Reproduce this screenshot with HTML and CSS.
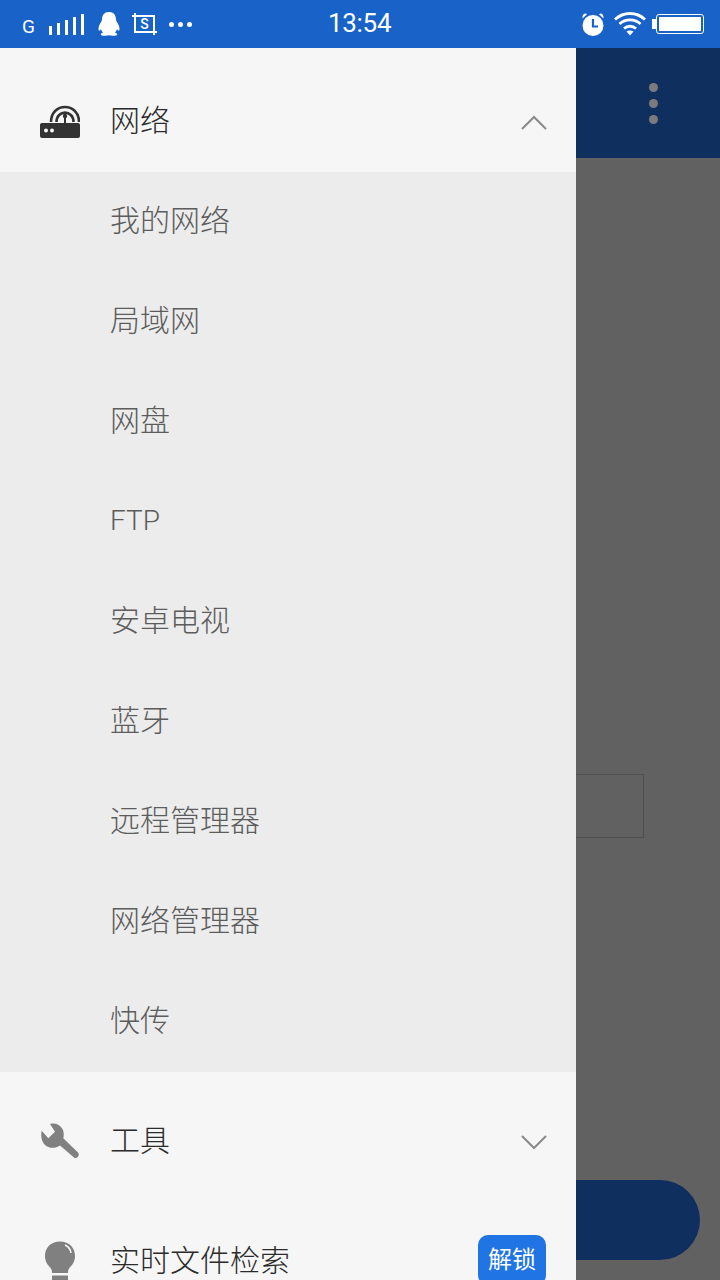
FILE: index.html
```html
<!DOCTYPE html>
<html lang="en">
<head>
    <meta charset="UTF-8">
    <meta name="viewport" content="width=device-width, initial-scale=1.0">
    <title>Drawer</title>
    <link rel="stylesheet" href="styles.css">
</head>
<body>

<div class="screen">
    <!-- Status bar -->
    <div class="status-bar">
        <div class="status-left">
            <span class="net-type">G</span>
            <div class="signal">
                <i class="bar-1"></i><i class="bar-2"></i><i class="bar-3"></i><i class="bar-4"></i><i class="bar-5"></i>
            </div>
            <svg class="qq-icon" width="22" height="24" viewBox="0 0 22 24">
                <path fill="#fff" d="M11 0C6.200 0 4.200 3.200 4 7.200 3.900 8.600 3.500 9.400 2.600 10.800 1.200 13 .2 15.600.6 18c.3 1.300 1.600.6 2.400-.9.4 1.500 1 2.600 2 3.500-1.500.5-2.400 1.200-2.200 2 .2 1.100 2.500 1.400 4.600 1.200 1.300-.1 2.500-.6 3.600-.6s2.300.5 3.600.6c2.100.2 4.400-.1 4.600-1.200.2-.8-.7-1.500-2.200-2 1-.9 1.600-2 2-3.500.8 1.500 2.100 2.200 2.400.9.4-2.400-.6-5-2-7.200-.9-1.400-1.300-2.200-1.400-3.600C17.800 3.200 15.800 0 11 0z"/>
            </svg>
            <div class="shot-icon">
                <svg class="shot-frame" width="25" height="22" viewBox="0 0 25 22">
                    <path fill="none" stroke="#fff" stroke-width="2" d="M3 0V19H25M0 3H22V22"/>
                </svg>
                <span>S</span>
            </div>
            <div class="more-dots"><i></i><i></i><i></i></div>
        </div>
        <div class="status-time">13:54</div>
        <div class="status-right">
            <svg width="24" height="24" viewBox="0 0 24 24">
                <path fill="#fff" d="M1.500 6.500 6 2.200C4.300.8 1 1.800 1.500 6.500zM22.500 6.500 18 2.200c1.700-1.400 5-.4 4.500 4.300z"/>
                <circle cx="12" cy="13.500" r="10.500" fill="#fff"/>
                <path fill="none" stroke="#1862c8" stroke-width="2.200" d="M12 7v7.500h5"/>
            </svg>
            <svg class="wifi-icon" width="32" height="24" viewBox="0 0 32 24">
                <g fill="none" stroke="#fff" stroke-width="2.800">
                    <path d="M1 7.500C9.500-.5 22.500-.5 31 7.500"/>
                    <path d="M5.500 12c6-5.500 15-5.500 21 0"/>
                    <path d="M10 16.500c3.500-3 8.500-3 12 0"/>
                </g>
                <path fill="#fff" d="M12.500 19.500c2-1.500 5-1.500 7 0L16 23.500z"/>
            </svg>
            <div class="battery">
                <i class="battery-tip"></i>
                <div class="battery-body"><i></i></div>
            </div>
        </div>
    </div>

    <!-- App behind the drawer -->
    <div class="app-bar">
        <div class="overflow-btn"><i></i><i></i><i></i></div>
    </div>
    <div class="app-body">
        <div class="outline-box"></div>
        <div class="fab-pill"></div>
    </div>

    <!-- Drawer -->
    <div class="drawer">
        <div class="menu-row first-row">
            <svg class="menu-icon" width="40" height="36" viewBox="0 0 40 36">
                <g fill="none" stroke="#333" stroke-width="2.600">
                    <path d="M11 20C11 0 39 0 39 20"/>
                    <path d="M16.500 20C16.500 7.500 33.500 7.500 33.500 20"/>
                </g>
                <circle cx="25" cy="14" r="2.200" fill="#333"/>
                <rect x="24" y="14" width="2" height="8" fill="#333"/>
                <rect x="0" y="21" width="40" height="15" rx="2" fill="#333"/>
                <circle cx="6" cy="28.500" r="2" fill="#f6f6f6"/>
                <circle cx="12" cy="28.500" r="2" fill="#f6f6f6"/>
            </svg>
            <span class="menu-label">网络</span>
            <svg class="chevron chevron-up" width="26" height="16" viewBox="0 0 26 16">
                <path fill="none" stroke="#8a8a8a" stroke-width="2" d="M1 15 13 3l12 12"/>
            </svg>
        </div>

        <div class="sub-list">
            <div class="sub-item">我的网络</div>
            <div class="sub-item">局域网</div>
            <div class="sub-item">网盘</div>
            <div class="sub-item latin">FTP</div>
            <div class="sub-item">安卓电视</div>
            <div class="sub-item">蓝牙</div>
            <div class="sub-item">远程管理器</div>
            <div class="sub-item">网络管理器</div>
            <div class="sub-item">快传</div>
        </div>

        <div class="menu-row tools-row">
            <svg class="menu-icon" width="40" height="38" viewBox="0 0 40 38">
                <path fill="#808080" d="M10 3C15 1.500 20 3.500 22.500 8 24 11 24 14.500 23.300 17.300L38 31.500C40.500 34 36.500 38.800 34 36.500L20 24.500C15 27.800 9 27.500 5 24 1.500 20.500.5 15 1.700 9.700L8.300 17.300 15 10.700z"/>
            </svg>
            <span class="menu-label">工具</span>
            <svg class="chevron chevron-down" width="26" height="16" viewBox="0 0 26 16">
                <path fill="none" stroke="#8a8a8a" stroke-width="2" d="M1 1l12 12L25 1"/>
            </svg>
        </div>

        <div class="menu-row search-row">
            <svg class="menu-icon" width="40" height="40" viewBox="0 0 40 40">
                <path fill="#808080" d="M20 1.500C10.500 1.500 5 8 5 16c0 6 3 9 5.500 12 1 1.200 1.500 2.500 1.500 5h16c0-2.500.5-3.800 1.500-5C32 25 35 22 35 16 35 8 29.500 1.500 20 1.500z"/>
                <path fill="none" stroke="#f6f6f6" stroke-width="1.500" d="M25 5c3.500 1.500 5.500 4.500 6 8"/>
                <rect x="12" y="35.500" width="16" height="4.500" fill="#808080"/>
            </svg>
            <span class="menu-label">实时文件检索</span>
            <span class="unlock-badge">解锁</span>
        </div>
    </div>
</div>

</body>
</html>
```

FILE: styles.css
```css
* {
    box-sizing: border-box;
}

html, body {
    margin: 0;
    padding: 0;
}

body {
    font-family: Roboto, "Noto Sans CJK SC", sans-serif;
    font-weight: 300;
    background: #616161;
}

.screen {
    position: relative;
    width: 720px;
    height: 1280px;
    overflow: hidden;
    background: #616161;
}

/* status bar */
.status-bar {
    height: 48px;
    background: #1862c8;
    color: white;
    display: flex;
    align-items: center;
    justify-content: space-between;
    position: relative;
}

.status-left {
    display: flex;
    align-items: center;
    padding-left: 22px;
}

.net-type {
    font-size: 19px;
    font-weight: 400;
    width: 27px;
    margin-top: 4px;
}

.signal {
    display: flex;
    align-items: flex-end;
    gap: 5px;
    height: 22px;
    width: 49px;
}

.signal i {
    display: block;
    width: 3px;
    background: white;
}

.bar-1 { height: 9px; }
.bar-2 { height: 12px; }
.bar-3 { height: 15px; }
.bar-4 { height: 18px; }
.bar-5 { height: 21px; }

.shot-icon {
    position: relative;
    width: 25px;
    height: 22px;
    margin-left: 12px;
    display: flex;
    align-items: center;
    justify-content: center;
    font-size: 14px;
    font-weight: 500;
}

.shot-frame {
    position: absolute;
    left: 0;
    top: 0;
}

.more-dots {
    display: flex;
    gap: 4px;
    margin-left: 12px;
}

.more-dots i {
    display: block;
    width: 5px;
    height: 5px;
    border-radius: 50%;
    background: white;
}

.status-time {
    font-size: 26px;
    font-weight: 400;
    letter-spacing: -0.3px;
    position: absolute;
    left: 328px;
    top: 8px;
}

.status-right {
    display: flex;
    align-items: center;
    gap: 9px;
    padding-right: 16px;
}

.wifi-icon {
    margin-right: -3px;
}

.battery {
    display: flex;
    align-items: center;
}

.battery-tip {
    display: block;
    width: 4px;
    height: 10px;
    background: white;
}

.battery-body {
    width: 48px;
    height: 20px;
    border: 1px solid white;
    border-radius: 3px;
    padding: 2px;
    background: #1862c8;
}

.battery-body i {
    display: block;
    height: 100%;
    background: white;
}

/* app behind the drawer */
.app-bar {
    height: 110px;
    background: #0f2f5f;
    display: flex;
    justify-content: flex-end;
    align-items: flex-start;
    padding: 35px 62px 0 0;
}

.overflow-btn {
    display: flex;
    flex-direction: column;
    gap: 7px;
}

.overflow-btn i {
    display: block;
    width: 9px;
    height: 9px;
    border-radius: 50%;
    background: #7b7b7e;
}

.app-body {
    height: 1122px;
    position: relative;
}

.outline-box {
    position: absolute;
    left: 500px;
    top: 616px;
    width: 144px;
    height: 64px;
    border: 1px solid #4f4f4f;
}

.fab-pill {
    position: absolute;
    left: 500px;
    top: 1022px;
    width: 200px;
    height: 80px;
    border-radius: 40px;
    background: #0f2f5f;
}

/* drawer */
.drawer {
    position: absolute;
    left: 0;
    top: 48px;
    bottom: 0;
    width: 576px;
    background: #f6f6f6;
    padding-top: 20px;
    overflow: hidden;
}

.menu-row {
    display: flex;
    align-items: center;
    padding-left: 40px;
    padding-right: 30px;
}

.first-row {
    height: 104px;
}

.tools-row {
    height: 120px;
    margin-top: 8px;
}

.search-row {
    height: 120px;
}

.menu-icon {
    flex: none;
}

.menu-label {
    font-size: 30px;
    line-height: 36px;
    color: #2b2b2b;
    margin: 1px 0 0 30px;
    flex: 1;
}

.chevron {
    margin-right: -1px;
}

.chevron-up {
    margin-top: 3px;
}

.chevron-down {
    margin-top: 6px;
}

.sub-list {
    background: #ececec;
}

.sub-item {
    height: 100px;
    line-height: 98px;
    padding-left: 110px;
    font-size: 30px;
    color: #5c5c5c;
}

.latin {
    font-size: 28px;
}

.unlock-badge {
    background: #2074e4;
    color: white;
    font-size: 24px;
    font-weight: 400;
    width: 68px;
    height: 50px;
    border-radius: 10px;
    text-align: center;
    line-height: 50px;
}
```
